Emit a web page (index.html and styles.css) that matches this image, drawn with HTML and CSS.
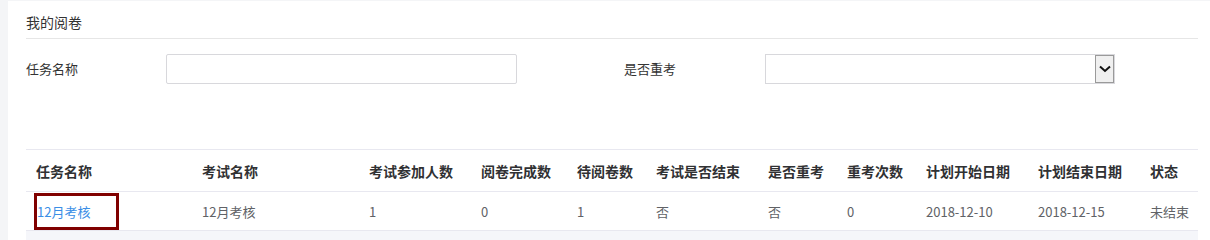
FILE: index.html
```html
<!DOCTYPE html>
<html lang="zh-CN">
<head>
<meta charset="UTF-8">
<title>我的阅卷</title>
<link rel="stylesheet" href="styles.css">
</head>
<body>
  <div class="card">
    <div class="card-title">我的阅卷</div>

    <!-- search form -->
    <div class="search-row">
      <label class="field-label">任务名称</label>
      <input class="field-input" type="text">
      <label class="field-label second">是否重考</label>
      <div class="select-wrap">
        <select class="field-select"></select>
        <span class="select-btn">
          <svg width="12" height="8" viewBox="0 0 12 8"><path d="M1 1.5 L6 6 L11 1.5" fill="none" stroke="#111" stroke-width="2"/></svg>
        </span>
      </div>
    </div>

    <table class="task-table">
      <colgroup>
        <col style="width:166px"><col style="width:167px"><col style="width:112px"><col style="width:96px">
        <col style="width:79px"><col style="width:112px"><col style="width:79px"><col style="width:79px">
        <col style="width:112px"><col style="width:112px"><col>
      </colgroup>
      <thead>
        <tr>
          <th>任务名称</th><th>考试名称</th><th>考试参加人数</th><th>阅卷完成数</th><th>待阅卷数</th>
          <th>考试是否结束</th><th>是否重考</th><th>重考次数</th><th>计划开始日期</th><th>计划结束日期</th><th>状态</th>
        </tr>
      </thead>
      <tbody>
        <tr>
          <td class="first"><a class="task-link" href="#">12月考核</a></td>
          <td>12月考核</td><td>1</td><td>0</td><td>1</td><td>否</td><td>否</td><td>0</td>
          <td>2018-12-10</td><td>2018-12-15</td><td>未结束</td>
        </tr>
      </tbody>
    </table>
    <div class="table-foot"></div>
  </div>
</body>
</html>
```
FILE: styles.css
```css
body {
  margin: 0;
  background: #f4f5f7;
  font-family: "Noto Sans CJK SC", "Liberation Sans", sans-serif;
  font-size: 13px;
  color: #333;
}

.card {
  margin: 1px 0 0 8px;
  background: #fff;
  padding: 0 12px 0 18px;
  height: 239px;
  overflow: hidden;
}

.card-title {
  height: 31px;
  padding-top: 6px;
  line-height: 31px;
  font-size: 14px;
  color: #333;
  border-bottom: 1px solid #e6e6e6;
}

.search-row {
  display: flex;
  align-items: center;
  margin-top: 15px;
  height: 30px;
}

.field-label {
  width: 140px;
  line-height: 30px;
  color: #333;
}

.field-label.second {
  width: 141px;
  margin-left: 107px;
}

.field-input {
  width: 351px;
  height: 30px;
  box-sizing: border-box;
  border: 1px solid #d8d8dc;
  border-radius: 2px;
  margin: 0;
}

.select-wrap {
  position: relative;
  width: 350px;
  height: 30px;
}

.field-select {
  appearance: none;
  -webkit-appearance: none;
  width: 100%;
  height: 30px;
  margin: 0;
  border: 1px solid #d8d8dc;
  background: #fff;
  box-sizing: border-box;
}

.select-btn {
  position: absolute;
  right: 1px;
  top: 1px;
  width: 19px;
  height: 28px;
  box-sizing: border-box;
  background: #f0f0f0;
  border: 1px solid #9a9a9a;
  display: flex;
  align-items: center;
  justify-content: center;
}

.task-table {
  margin-top: 65px;
  width: 1172px;
  border-collapse: collapse;
  table-layout: fixed;
}

.task-table th,
.task-table td {
  text-align: left;
  padding: 0 0 0 10px;
  white-space: nowrap;
  border-top: 1px solid #e8e8f0;
}

.task-table th {
  height: 41px;
  font-size: 14px;
  font-weight: bold;
  color: #303133;
}

.task-table td {
  height: 38px;
  color: #606266;
  border-bottom: 1px solid #e8e8f0;
}

.task-table td.first {
  padding-left: 11px;
}

.task-link {
  display: inline-block;
  width: 79px;
  height: 31px;
  line-height: 31px;
  color: #3a8ee6;
  text-decoration: none;
  outline: 3px solid #800000;
}

.table-foot {
  width: 1172px;
  height: 12px;
  background: #f5f6fa;
}
```
